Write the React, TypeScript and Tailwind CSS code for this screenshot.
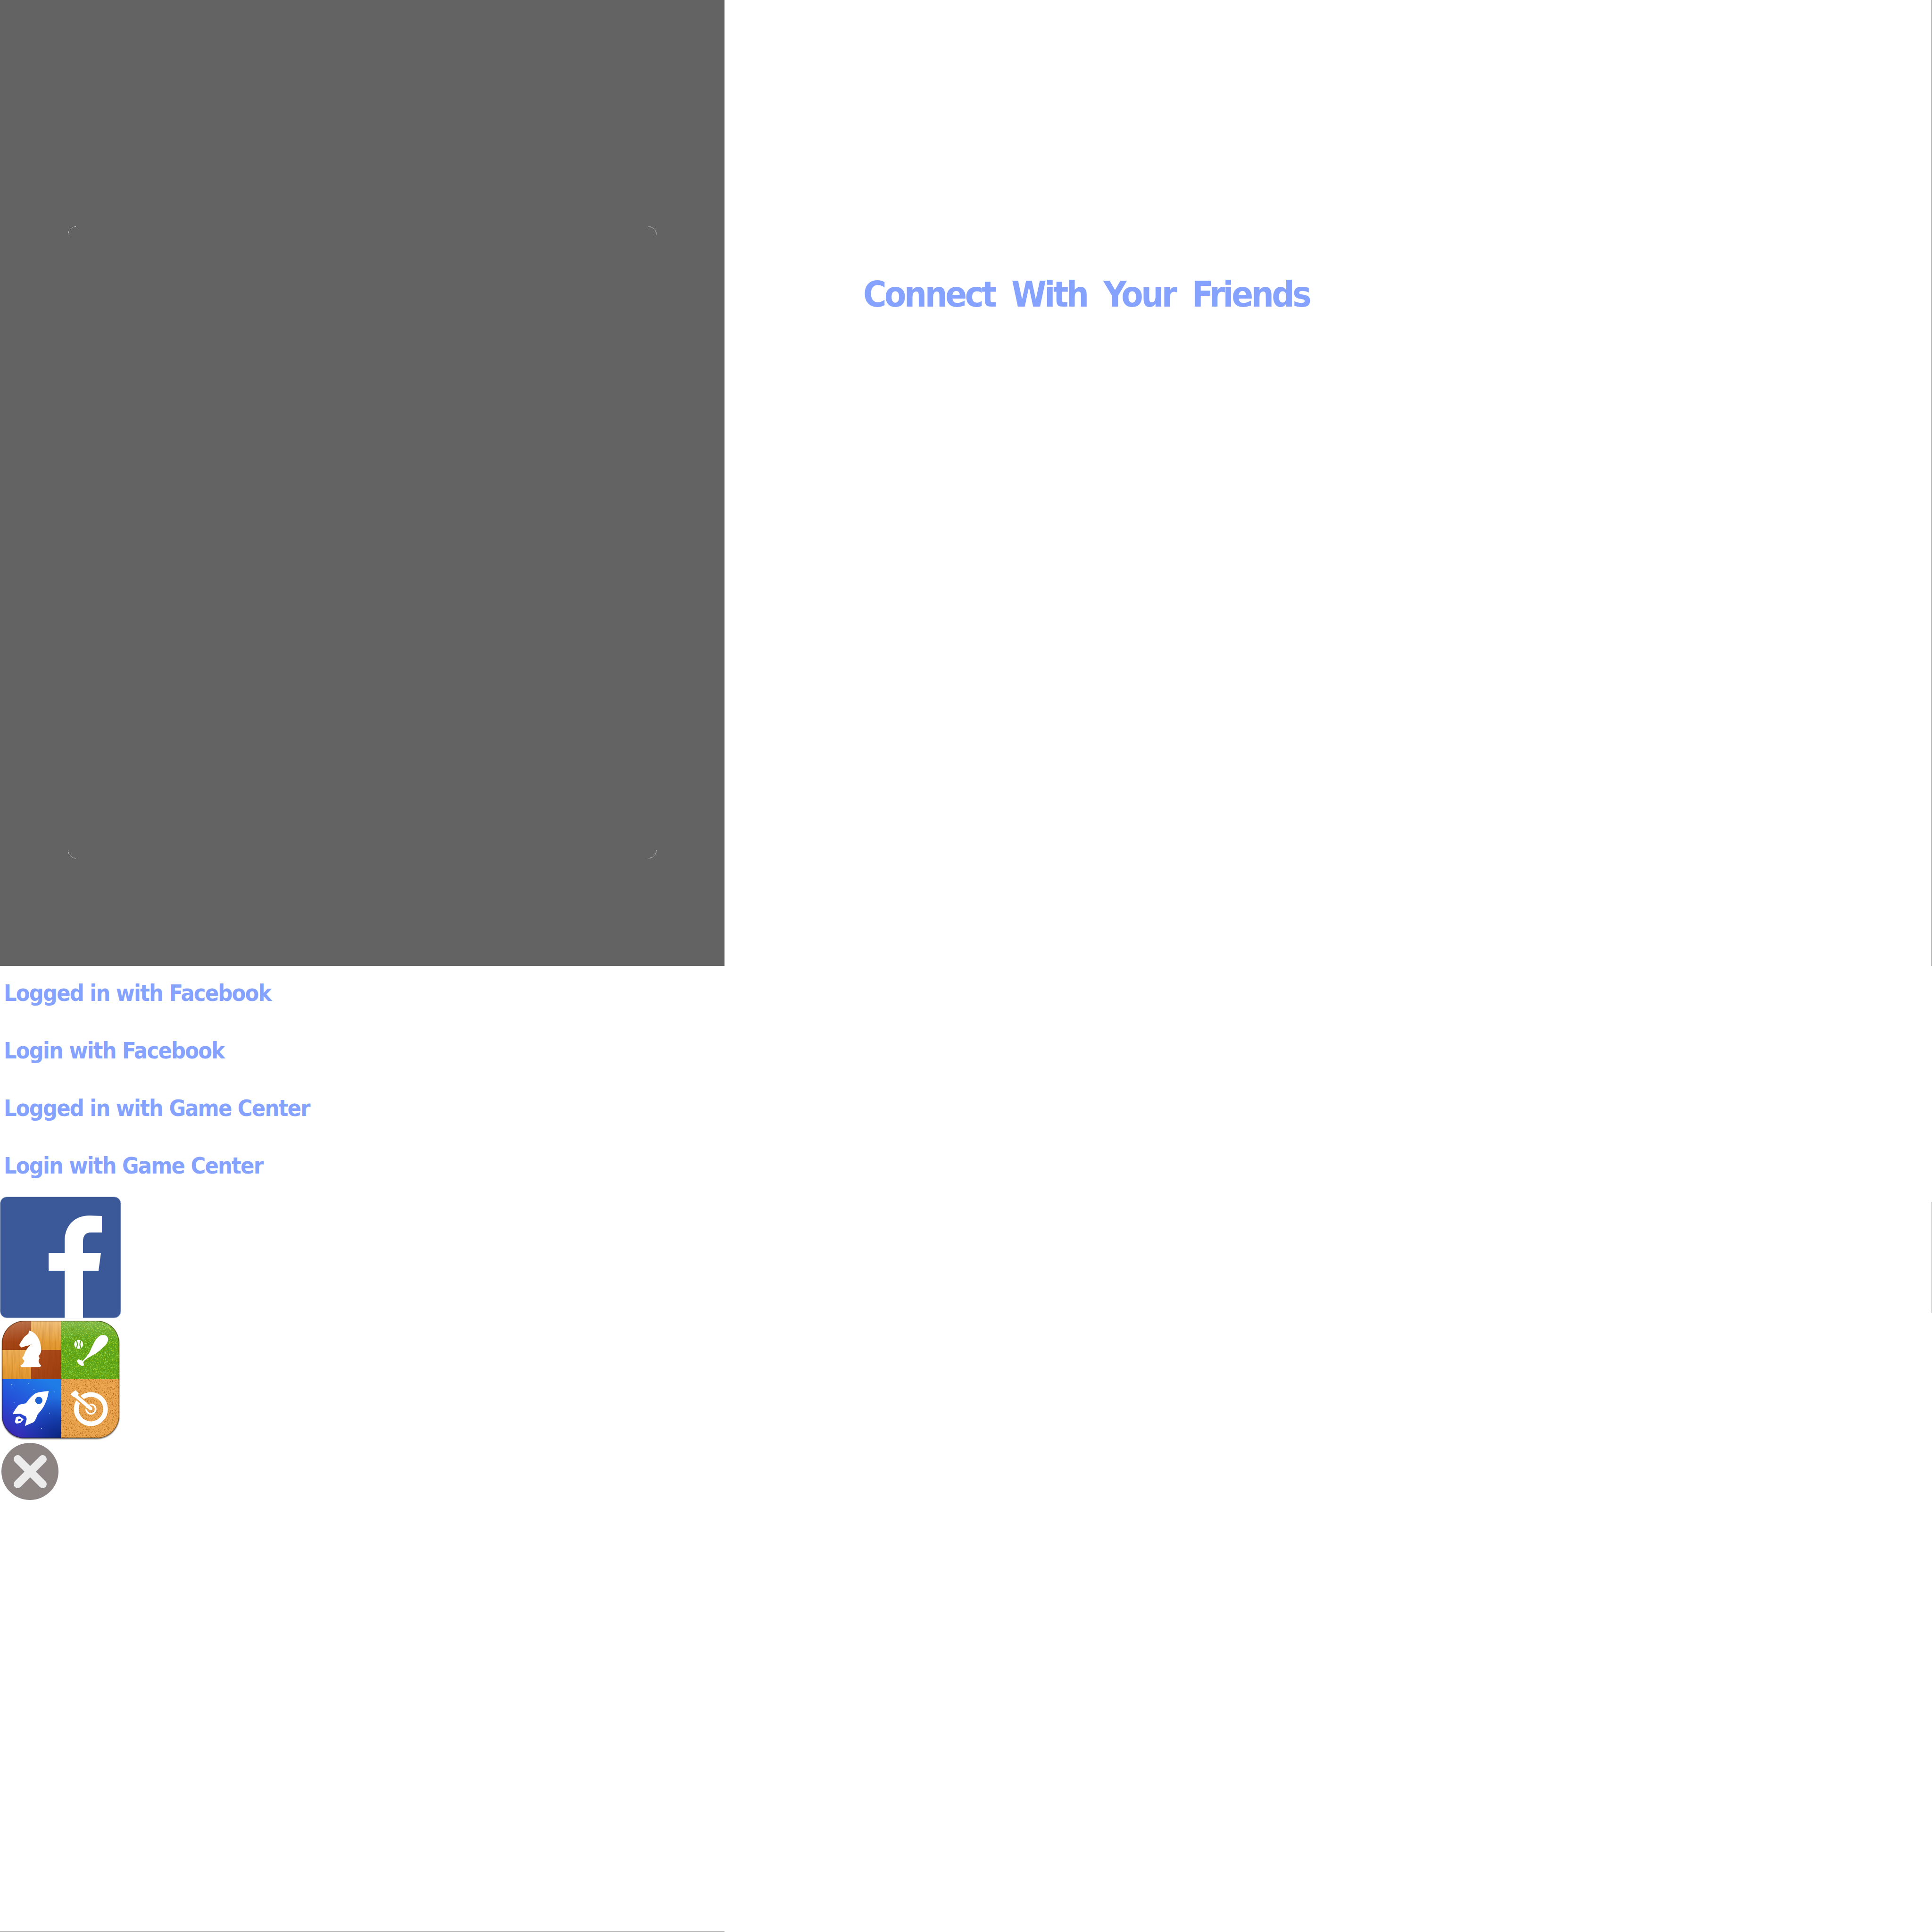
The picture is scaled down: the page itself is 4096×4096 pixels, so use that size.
import React from "react";

const labels = [
  "Logged in with Facebook",
  "Login with Facebook",
  "Logged in with Game Center",
  "Login with Game Center",
];

const Corner = ({ d }: { d: string }) => (
  <svg width="18" height="18" viewBox="0 0 18 18" fill="none" className="block">
    <path d={d} stroke="#e8e8e8" strokeWidth="1" strokeDasharray="2 1" />
  </svg>
);

const FacebookIcon = () => (
  <svg width="260" height="260" viewBox="0 0 260 260" className="block">
    <rect x="0.5" y="1.5" width="255.5" height="256.5" rx="14" fill="#3b5998" stroke="#9aabcb" strokeWidth="1" />
    <path
      d="M216 42 L216 77 L193 77 C181 77 176 84 176 96 L176 120 L214 120 L209 158 L176 158 L176 258 L137 258 L137 158 L103 158 L103 120 L137 120 L137 96 C137 62 158 41 190 41 Z"
      fill="#ffffff"
    />
  </svg>
);

const GameCenterIcon = () => (
  <svg width="260" height="260" viewBox="0 0 260 260" className="block">
    <defs>
      <clipPath id="gc-clip">
        <rect x="4" y="4" width="249" height="249" rx="48" />
      </clipPath>
      <linearGradient id="gc-dark" x1="0" y1="0" x2="1" y2="1">
        <stop offset="0" stopColor="#b04f20" />
        <stop offset="1" stopColor="#9c3d0e" />
      </linearGradient>
      <linearGradient id="gc-light" x1="0" y1="0" x2="0" y2="1">
        <stop offset="0" stopColor="#efb158" />
        <stop offset="1" stopColor="#e2962c" />
      </linearGradient>
      <linearGradient id="gc-blue" x1="0.7" y1="0" x2="0.1" y2="1">
        <stop offset="0" stopColor="#1f7be6" />
        <stop offset="0.5" stopColor="#2550d8" />
        <stop offset="1" stopColor="#3b22ac" />
      </linearGradient>
      <radialGradient id="gc-deep" cx="1" cy="1" r="0.7">
        <stop offset="0" stopColor="#06237a" stopOpacity="0.95" />
        <stop offset="1" stopColor="#06237a" stopOpacity="0" />
      </radialGradient>
      <linearGradient id="gc-gloss" x1="0" y1="0" x2="0" y2="1">
        <stop offset="0" stopColor="#ffffff" stopOpacity="0.22" />
        <stop offset="1" stopColor="#ffffff" stopOpacity="0" />
      </linearGradient>
      <filter id="gc-grass" x="0" y="0" width="100%" height="100%" colorInterpolationFilters="sRGB">
        <feTurbulence type="fractalNoise" baseFrequency="0.8" numOctaves="2" seed="4" />
        <feColorMatrix values="0 0 0 0 0.72  0 0 0 0 0.85  0 0 0 0 0.12  0 0 0 5 -2.7" />
      </filter>
      <filter id="gc-cork" x="0" y="0" width="100%" height="100%" colorInterpolationFilters="sRGB">
        <feTurbulence type="fractalNoise" baseFrequency="0.7" numOctaves="2" seed="9" />
        <feColorMatrix values="0 0 0 0 0.7  0 0 0 0 0.4  0 0 0 0 0.12  0 0 0 5 -2.8" />
      </filter>
      <filter id="gc-wood" x="0" y="0" width="100%" height="100%" colorInterpolationFilters="sRGB">
        <feTurbulence type="fractalNoise" baseFrequency="0.25 0.02" numOctaves="2" seed="3" />
        <feColorMatrix values="0 0 0 0 0.45  0 0 0 0 0.18  0 0 0 0 0.02  0 0 0 2.2 -1" />
      </filter>
      <filter id="gc-shadow" x="-5%" y="-5%" width="110%" height="110%">
        <feGaussianBlur stdDeviation="1.2" />
      </filter>
    </defs>

    <rect x="4" y="6" width="249" height="249" rx="48" fill="#444444" opacity="0.8" filter="url(#gc-shadow)" />

    <g clipPath="url(#gc-clip)">
      <rect x="4" y="4" width="62" height="62" fill="url(#gc-dark)" />
      <rect x="66" y="4" width="63" height="62" fill="url(#gc-light)" />
      <rect x="4" y="66" width="62" height="62" fill="url(#gc-light)" />
      <rect x="66" y="66" width="63" height="62" fill="url(#gc-dark)" />
      <rect x="4" y="4" width="125" height="124" filter="url(#gc-wood)" opacity="0.22" />

      <rect x="129" y="4" width="124" height="124" fill="#5aa31a" />
      <rect x="129" y="4" width="124" height="124" filter="url(#gc-grass)" />

      <rect x="4" y="128" width="125" height="125" fill="url(#gc-blue)" />
      <rect x="4" y="128" width="125" height="125" fill="url(#gc-deep)" />
      <g fill="#cfe4ff">
        <circle cx="25" cy="140" r="1" />
        <circle cx="60" cy="137" r="0.8" />
        <circle cx="30" cy="178" r="0.8" />
        <circle cx="105" cy="200" r="0.8" />
        <circle cx="88" cy="232" r="1" />
        <circle cx="116" cy="155" r="0.7" />
        <circle cx="72" cy="150" r="0.7" />
      </g>

      <rect x="129" y="128" width="124" height="125" fill="#eaa54e" />
      <rect x="129" y="128" width="124" height="125" filter="url(#gc-cork)" />

      <rect x="4" y="4" width="249" height="46" fill="url(#gc-gloss)" />
      <rect x="4" y="4" width="249" height="249" rx="48" fill="none" stroke="#2a1500" strokeOpacity="0.5" strokeWidth="3" />
    </g>

    {/* knight */}
    <path
      d="M61.7 24.7 C69 27 75 31 78 36 C84 44 87 55 87.3 65.7 C87.5 71 85 75 81.7 79 L84 83.3 L81.7 89 C82 93 84 96 87.3 99 L85 102.3 L45 102.3 L43.3 99 C47 97 50 94 51.7 89 L46.7 83.3 L50 79 C53 72 55 63 66.7 54 C62 56 60 57 56.7 57.3 C52 58 49 60.7 45 60.7 L40.7 55.7 C44 49 48 43 52 38 C55 35 58 33 60 32.3 Z"
      fill="#ffffff"
    />

    {/* bat and ball */}
    <path
      d="M162.7 89 L166.7 85.7 L175 89 C181 84 185 78 190 70.7 C194 62 198 52 203.3 44 C207 39 211 35.5 215 34.7 C219 33.7 222 34 225 35.7 C228 38 229.5 41 229.3 44 C229 48 227 51 225 54 C219 61 212 67 205 72.3 C198 77 191 80 185 84 C181 87 178 89 176.7 92.3 L178.3 99 L173.3 100 L166.7 95.7 Z"
      fill="#ffffff"
    />
    <circle cx="166.7" cy="54" r="9.5" fill="#ffffff" />
    <path d="M161 45 C165 50 165 58 161 63 M172.4 45 C168.4 50 168.4 58 172.4 63" fill="none" stroke="#5aa31a" strokeWidth="2" />

    {/* rocket */}
    <path
      d="M103.3 153 C93 154 84 155 76.7 157.3 C68 162 61 171 55 179 L40 182.3 C35 188 30 195 26.7 202.3 L43.3 201.3 L55 207.3 L56.7 212.3 L52.7 227.3 L71.7 219 C76 214 78 208 80 202.3 C88 194 93 187 96.7 177.3 C100 170 102 161 103.3 153 Z"
      fill="#ffffff"
    />
    <circle cx="82.3" cy="173" r="7.7" fill="#1f62d4" />
    <path
      d="M41.7 206.7 C37 207 34 208 33.3 210.7 L31.7 219 L35 222.3 L43.3 220.7 L50 213.3 Z M38 214 C41 212 44 213 45 214 C44 216 41 218 38 217 Z"
      fill="#ffffff"
      fillRule="evenodd"
    />

    {/* dart and target */}
    <circle cx="192.7" cy="191.4" r="31" fill="none" stroke="#ffffff" strokeWidth="10" />
    <circle cx="192.7" cy="191.4" r="10" fill="none" stroke="#ffffff" strokeWidth="3.5" />
    <path d="M155 158 L195 194" stroke="#e9a24c" strokeWidth="13" />
    <path d="M157 160 L192 190" stroke="#ffffff" strokeWidth="7" strokeLinecap="round" />
    <path d="M196 194 L182 188 L189 181 Z" fill="#ffffff" />
    <path d="M149 160 L160 151 L167 158 L162 168 L155 165 Z" fill="#ffffff" />
  </svg>
);

const CloseIcon = () => (
  <svg width="128" height="128" viewBox="0 0 128 128" className="block">
    <circle cx="63.5" cy="63.5" r="60.5" fill="#8c8483" />
    <path d="M37.5 37.5 L90.5 90.5 M90.5 37.5 L37.5 90.5" stroke="#ececec" strokeWidth="17" strokeLinecap="round" />
  </svg>
);

const App = () => {
  return (
    <div className="w-[4096px] h-[4096px] overflow-hidden bg-white flex flex-col font-['DejaVu_Sans_Condensed','DejaVu_Sans',sans-serif] font-bold text-[#85a2ff]">
      <div className="h-[2048px] flex border-r border-[#636363]">
        <div className="w-[1536px] h-full bg-[#636363] pl-[144px] pt-[480px]">
          <div className="w-[1248px] h-[1340px] flex flex-col justify-between">
            <div className="flex justify-between">
              <Corner d="M0.5 17 C0.5 8 8 0.5 17 0.5" />
              <Corner d="M1 0.5 C10 0.5 17.5 8 17.5 17" />
            </div>
            <div className="flex justify-between">
              <Corner d="M0.5 1 C0.5 10 8 17.5 17 17.5" />
              <Corner d="M1 17.5 C10 17.5 17.5 10 17.5 1" />
            </div>
          </div>
        </div>
        <div className="pl-[294px] pt-[580px]">
          <h1 className="text-[75px] leading-[88px] tracking-[-4.4px] [word-spacing:16px] whitespace-nowrap">
            Connect With Your Friends
          </h1>
        </div>
      </div>

      <div className="pl-2">
        {labels.map((label) => (
          <div key={label} className="h-[122px] pt-[29px] text-[48px] leading-[56px] tracking-[-1.7px] whitespace-nowrap">
            {label}
          </div>
        ))}
      </div>

      <div className="flex justify-between">
        <FacebookIcon />
        <div className="w-px h-[235px] mt-3 bg-[#9fa8c6]" />
      </div>
      <GameCenterIcon />
      <CloseIcon />

      <div className="w-[1536px] h-px mt-auto bg-[#636363]" />
    </div>
  );
};

export default App;
